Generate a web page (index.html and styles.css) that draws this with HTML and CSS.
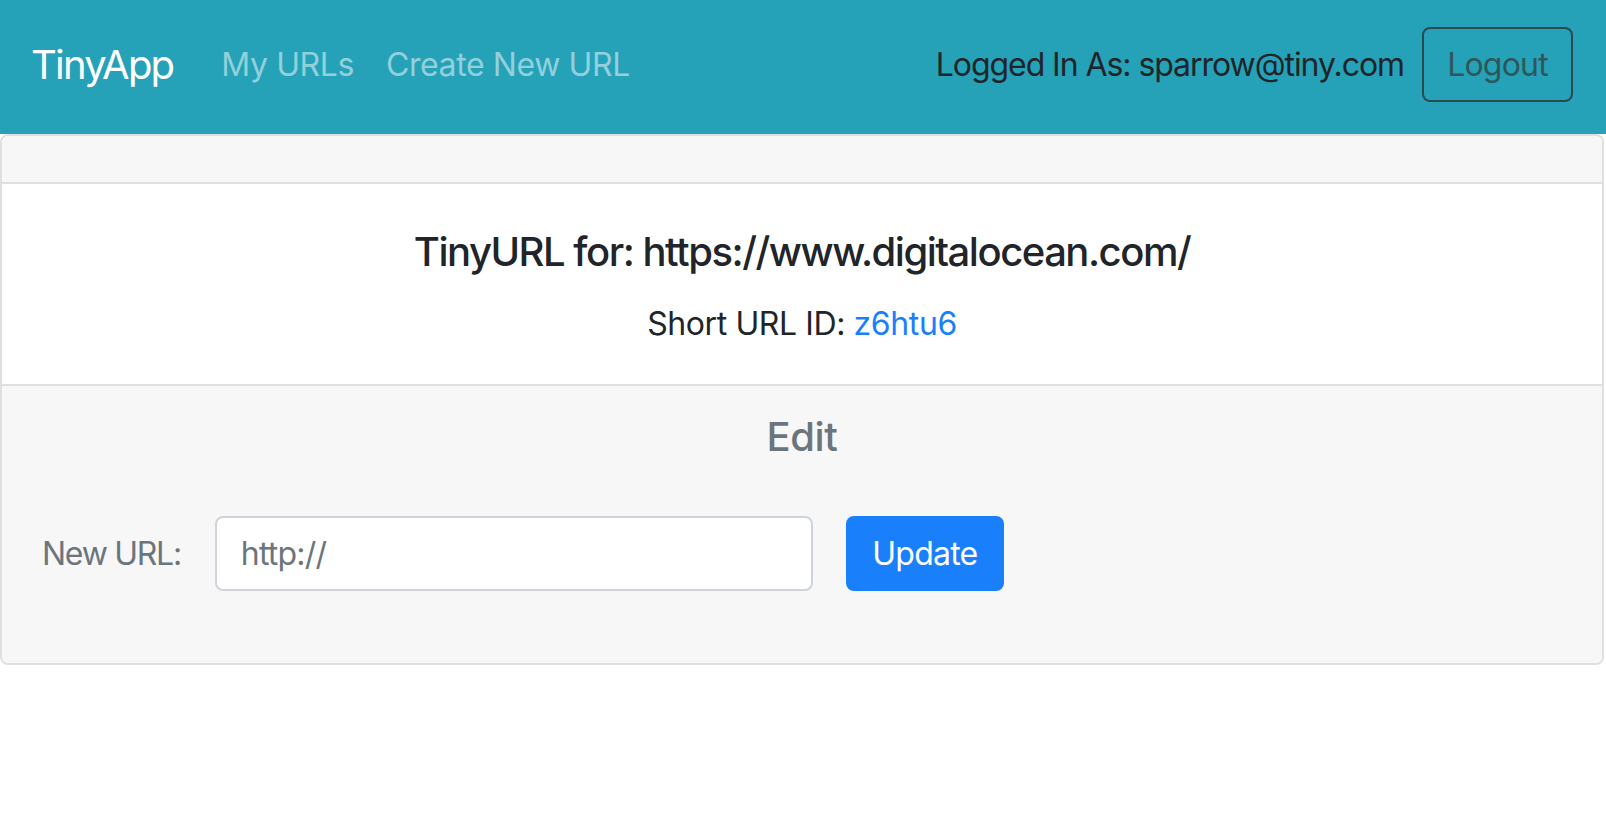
FILE: index.html
```html
<!DOCTYPE html>
<html lang="en">
<head>
<meta charset="utf-8">
<title>TinyApp</title>
<link rel="stylesheet" href="styles.css">
</head>
<body>
<nav class="navbar">
  <a class="brand" href="#">TinyApp</a>
  <ul class="nav-links">
    <li><a href="#">My URLs</a></li>
    <li><a href="#">Create New URL</a></li>
  </ul>
  <div class="nav-right">
    <span class="logged">Logged In As: sparrow@tiny.com</span>
    <button class="btn-logout" type="button">Logout</button>
  </div>
</nav>
<main class="card">
  <div class="card-header"></div>
  <div class="card-body">
    <h5 class="card-title">TinyURL for: https://www.digitalocean.com/</h5>
    <p class="card-text">Short URL ID: <a href="#">z6htu6</a></p>
  </div>
  <div class="card-footer">
    <h5 class="edit-title">Edit</h5>
    <form class="edit-form">
      <label class="edit-label" for="newurl">New URL:</label>
      <input class="edit-input" id="newurl" type="text" value="http://">
      <button class="btn-update" type="button">Update</button>
    </form>
  </div>
</main>
</body>
</html>
```
FILE: styles.css
```css
* { box-sizing: border-box; }
body {
  margin: 0;
  font-family: "Inter", "Roboto", sans-serif;
  letter-spacing: -0.025em;
  color: #212529;
  background: #fff;
}
a { text-decoration: none; }
button, input { letter-spacing: -0.025em; }

.navbar {
  height: 134px;
  display: flex;
  align-items: center;
  padding: 0 33px 5px 31px;
  background: #25a2b8;
}
.brand {
  font-size: 40px;
  line-height: 48px;
  letter-spacing: -0.045em;
  color: #fff;
  margin-right: 32px;
}
.nav-links {
  display: flex;
  list-style: none;
  margin: 0;
  padding: 0;
}
.nav-links a {
  display: block;
  font-size: 32px;
  line-height: 48px;
  padding: 0 16px;
  color: #92d0db;
}
.nav-right {
  margin-left: auto;
  display: flex;
  align-items: center;
  gap: 18px;
}
.logged {
  font-size: 32px;
  line-height: 48px;
  letter-spacing: -0.033em;
  color: #212529;
}
.btn-logout {
  height: 75px;
  width: 151px;
  padding: 0;
  font-family: inherit;
  font-size: 32px;
  color: #2f575b;
  background: transparent;
  border: 2px solid #2c4a4e;
  border-radius: 8px;
}

.card {
  display: block;
  margin-right: 2px;
  border: 2px solid #dfdfdf;
  border-radius: 8px;
  overflow: hidden;
}
.card-header {
  height: 48px;
  background: #f7f7f7;
  border-bottom: 2px solid #dfdfdf;
}
.card-body {
  padding: 44px 40px 36px;
  text-align: center;
  background: #fff;
}
.card-title {
  margin: 0 0 24px;
  font-size: 40px;
  line-height: 48px;
  font-weight: 500;
  letter-spacing: -0.037em;
  color: #212529;
}
.card-text {
  margin: 0;
  font-size: 32px;
  line-height: 48px;
}
.card-text a { color: #1a7ffb; }

.card-footer {
  background: #f7f7f7;
  border-top: 2px solid #dfdfdf;
  padding: 27px 40px 24px;
}
.edit-title {
  margin: 0 0 55px;
  text-align: center;
  font-size: 40px;
  line-height: 48px;
  font-weight: 500;
  color: #6c757d;
}
.edit-form {
  display: flex;
  align-items: center;
  margin-bottom: 48px;
}
.edit-label {
  font-size: 32px;
  line-height: 48px;
  letter-spacing: -0.04em;
  color: #6c757d;
  margin-right: 34px;
}
.edit-input {
  width: 598px;
  height: 75px;
  padding: 0 24px;
  font-family: inherit;
  font-size: 32px;
  color: #6c757d;
  background: #fff;
  border: 2px solid #ced4da;
  border-radius: 8px;
  margin-right: 33px;
}
.btn-update {
  width: 158px;
  height: 75px;
  padding: 0;
  font-family: inherit;
  font-size: 32px;
  color: #fff;
  background: #1a7ffb;
  border: none;
  border-radius: 8px;
}
```
